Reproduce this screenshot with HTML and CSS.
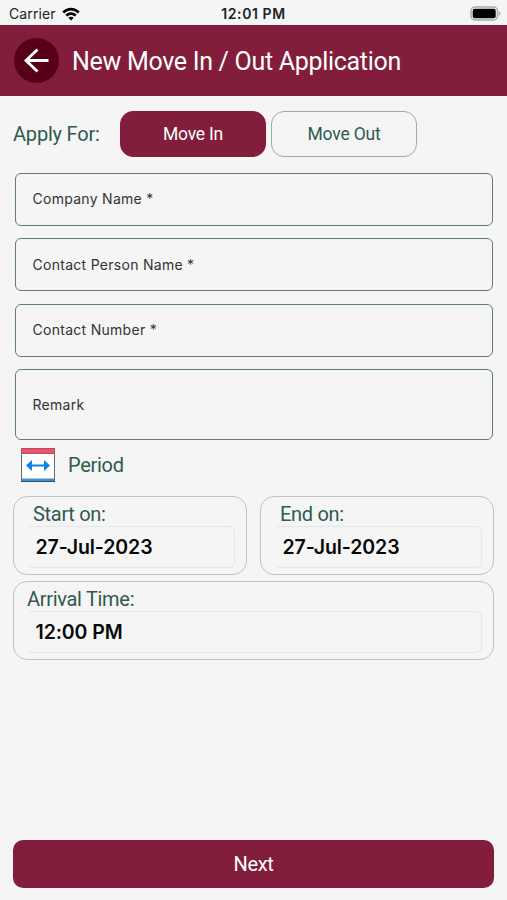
FILE: index.html
```html
<!DOCTYPE html>
<html lang="en">
<head>
<meta charset="utf-8">
<meta name="viewport" content="width=device-width, initial-scale=1">
<title>New Move In / Out Application</title>
<link rel="stylesheet" href="styles.css">
</head>
<body>
<div class="status">
  <div class="carrier"><span>Carrier</span>
    <svg class="wifi" viewBox="0 0 18 14" width="18" height="14"><path d="M0.3 4.6C5.2-.7 12.8-.7 17.7 4.6L15.8 6.6C12 2.600 6 2.600 2.200 6.600ZM3.300 7.700C6.500 4.400 11.500 4.400 14.700 7.700L12.800 9.600C10.600 7.400 7.400 7.400 5.200 9.600ZM6.300 10.700C7.800 9.300 10.200 9.300 11.700 10.700L9 13.500Z"/></svg>
  </div>
  <span class="clock">12:01 PM</span>
  <svg class="battery" viewBox="0 0 31 15" width="31" height="15"><rect x="1" y="1" width="26.500" height="13" rx="4" fill="#f6f6f6" stroke="#a9a9a9" stroke-width="1.500"/><rect x="2.700" y="2.800" width="23" height="9.400" rx="2" fill="#000"/><path d="M28.900 5.200Q30.400 5.800 30.400 7.500T28.900 9.800Z" fill="#a9a9a9"/></svg>
</div>
<header class="header">
  <button class="back" aria-label="Back"><svg viewBox="0 0 45 45" width="45" height="45" fill="none" stroke="#fff" stroke-width="2.800"><path d="M34.500 22.500H12M23.500 11.500L12 22.500L23.500 33.500"/></svg></button>
  <h1>New Move In / Out Application</h1>
</header>
<main class="form">
  <div class="apply">
    <span class="apply-label">Apply For:</span>
    <button class="choice selected">Move In</button>
    <button class="choice">Move Out</button>
  </div>
  <div class="fields">
    <div class="field"><span>Company Name *</span></div>
    <div class="field"><span>Contact Person Name *</span></div>
    <div class="field"><span>Contact Number *</span></div>
    <div class="field remark"><span>Remark</span></div>
  </div>
  <div class="period">
    <svg viewBox="0 0 34 34" width="34" height="34"><rect x=".5" y=".5" width="33" height="33" fill="#fff" stroke="#626d77"/><path fill="#e9526b" d="M.5.500H33.500V6H.500Z"/><path fill="#b94a61" d="M0 0H34V1H0ZM0 5.300H34V6H0Z"/><path fill="#3f92d2" d="M1 30.500H33V33H1Z"/><path fill="#33516b" d="M0 33H34V34H0Z"/><path fill="#0d82e8" d="M5 17.500L11 12V16.600H23V12L29 17.500L23 23V18.400H11V23Z"/></svg>
    <span>Period</span>
  </div>
  <div class="dates">
    <section class="card"><div class="label">Start on:</div><div class="value">27-Jul-2023</div></section>
    <section class="card"><div class="label">End on:</div><div class="value">27-Jul-2023</div></section>
  </div>
  <section class="card arrival"><div class="label">Arrival Time:</div><div class="value">12:00 PM</div></section>
  <button class="next">Next</button>
</main>
</body>
</html>
```

FILE: styles.css
```css
* { box-sizing: border-box; }
body {
  margin: 0;
  height: 900px;
  display: flex;
  flex-direction: column;
  background: #f5f5f5;
  font-family: Roboto, sans-serif;
  color: #2f5a4e;
}
button { font: inherit; letter-spacing: inherit; padding: 0; border: 0; }
.status {
  height: 25px;
  flex: none;
  display: grid;
  grid-template-columns: 1fr auto 1fr;
  align-items: center;
  padding: 2px 6px 0 9px;
  font: 14px/20px Inter, sans-serif;
  color: #222;
}
.carrier { display: flex; align-items: center; gap: 6px; letter-spacing: .1px; }
.wifi { fill: #000; }
.clock { font-weight: 600; letter-spacing: .6px; margin-right: 3px; }
.battery { justify-self: end; }
.header {
  height: 71px;
  flex: none;
  display: flex;
  align-items: center;
  gap: 13px;
  padding-left: 14px;
  background: #821e3b;
  color: #fff;
}
.back { width: 45px; height: 45px; border-radius: 50%; background: #570017; }
.back svg { display: block; }
h1 { margin: 2px 0 0; font-size: 25px; font-weight: 400; line-height: 30px; letter-spacing: -.3px; white-space: nowrap; }
.form { flex: 1; display: flex; flex-direction: column; padding: 15px 13px 12px; letter-spacing: -.3px; }
.apply { display: flex; align-items: center; height: 46px; }
.apply-label { width: 107px; font-size: 20px; letter-spacing: -.2px; }
.choice {
  width: 146px;
  height: 46px;
  margin-right: 5px;
  border: 1px solid #9daca7;
  border-radius: 13px;
  background: transparent;
  color: #2f5a4e;
  font-size: 17.500px;
  letter-spacing: -.2px;
}
.selected { background: #821e3b; border-color: #821e3b; color: #fff; }
.fields { display: grid; gap: 12.500px; padding: 15.500px 1px 0 2px; }
.field {
  height: 53px;
  display: flex;
  align-items: center;
  padding-left: 16.500px;
  border: 1.500px solid #607e75;
  border-radius: 6px;
  color: #333;
  font: 14px/20px Inter, sans-serif;
  letter-spacing: .28px;
}
.remark { height: 71px; }
.period { display: flex; align-items: center; height: 34px; margin: 8px 0 14px 8px; gap: 13px; font-size: 20px; }
.dates { display: grid; grid-template-columns: 234px 234px; justify-content: space-between; }
.card { height: 79px; padding: 5px 11px 0 13px; border: 1px solid #bfc3c2; border-radius: 14px; }
.label { padding-left: 6px; font-size: 20px; line-height: 24px; }
.value {
  height: 42px;
  padding-left: 7.500px;
  border: 1px solid #e5e6e6;
  border-left-color: transparent;
  border-radius: 6px;
  color: #080808;
  font: 600 19.500px/41px Inter, sans-serif;
  letter-spacing: -.1px;
}
.arrival { margin-top: 6px; }
.arrival .label { padding-left: 0; line-height: 25px; margin-bottom: -1px; }
.next { height: 48px; margin-top: auto; border-radius: 10px; background: #821e3b; color: #fff; font-size: 20px; }
```
